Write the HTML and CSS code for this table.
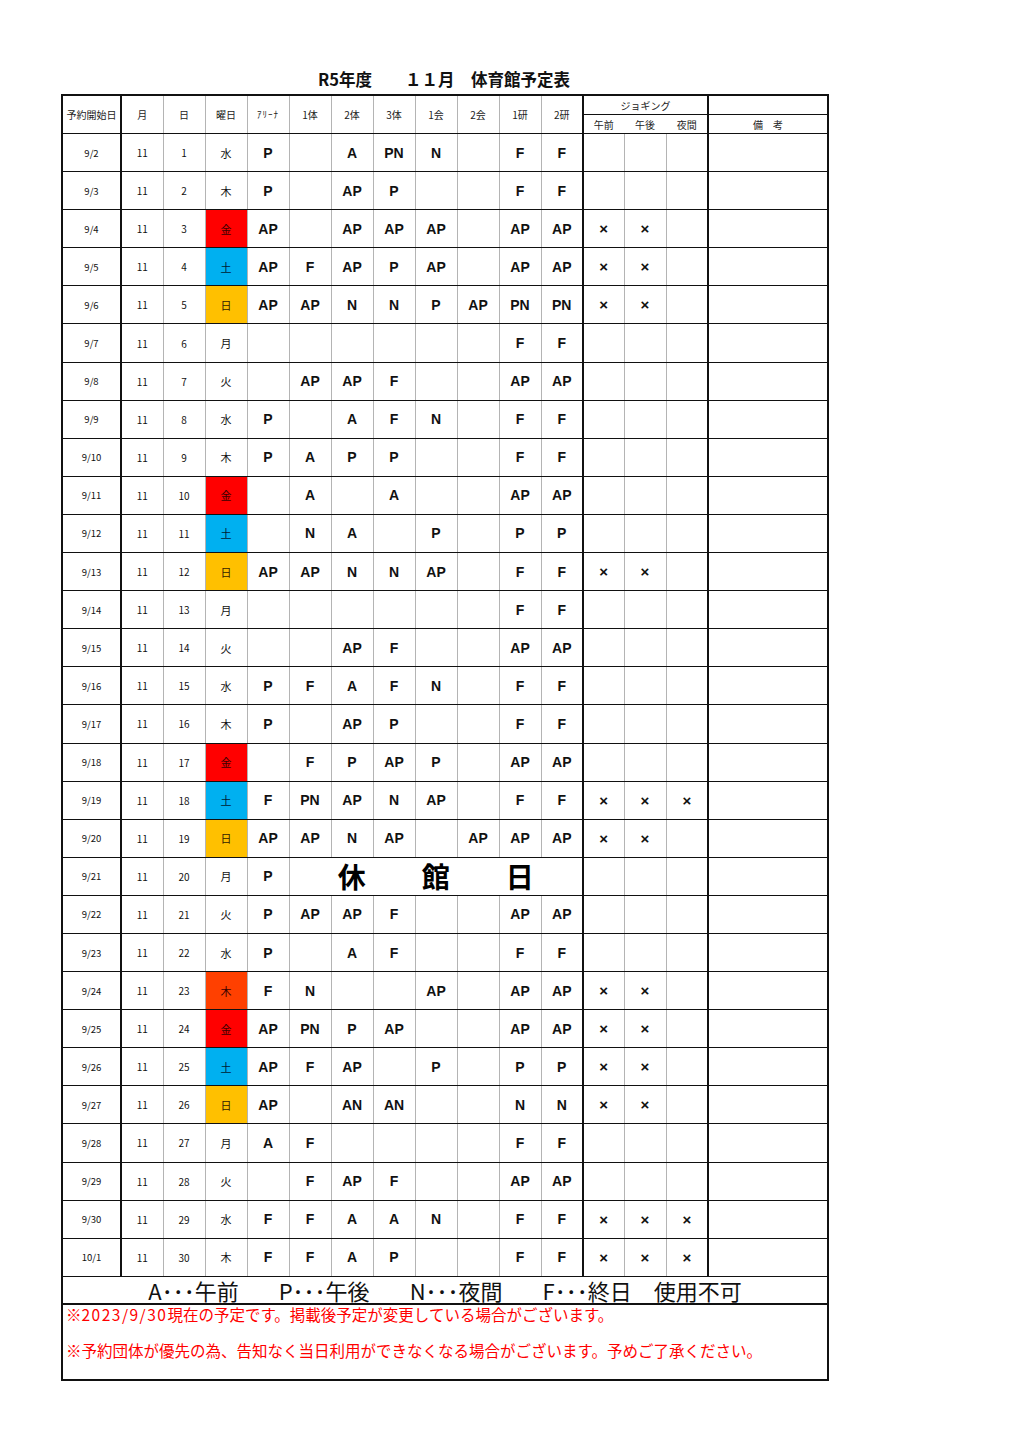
FILE: index.html
```html
<!DOCTYPE html>
<html lang="ja">
<head>
<meta charset="utf-8">
<title>R5年度 11月 体育館予定表</title>
<link rel="stylesheet" href="styles.css">
</head>
<body>
<div class="page">
  <h1 class="title">R5年度　　１１月　体育館予定表</h1>
  <table class="sched">
    <colgroup>
      <col class="c-date"><col class="c-n"><col class="c-n"><col class="c-n">
      <col class="c-n"><col class="c-n"><col class="c-n"><col class="c-n"><col class="c-n"><col class="c-n"><col class="c-n"><col class="c-n">
      <col class="c-j"><col class="c-n"><col class="c-n"><col class="c-note">
    </colgroup>
    <thead>
      <tr class="h1">
        <th rowspan="2" class="dk">予約開始日</th>
        <th rowspan="2">月</th>
        <th rowspan="2">日</th>
        <th rowspan="2">曜日</th>
        <th rowspan="2" class="hk">ｱﾘｰﾅ</th>
        <th rowspan="2">1体</th>
        <th rowspan="2">2体</th>
        <th rowspan="2">3体</th>
        <th rowspan="2">1会</th>
        <th rowspan="2">2会</th>
        <th rowspan="2">1研</th>
        <th rowspan="2" class="dk">2研</th>
        <th colspan="3" class="dk">ジョギング</th>
        <th></th>
      </tr>
      <tr class="h2">
        <th class="nb">午前</th>
        <th class="nb">午後</th>
        <th class="dk">夜間</th>
        <th>備　考</th>
      </tr>
    </thead>
    <tbody>
      <tr><td class="d dk">9/2</td><td class="m">11</td><td class="m">1</td><td class="w">水</td><td>P</td><td></td><td>A</td><td>PN</td><td>N</td><td></td><td>F</td><td class="dk">F</td><td></td><td></td><td class="dk"></td><td></td></tr>
      <tr><td class="d dk">9/3</td><td class="m">11</td><td class="m">2</td><td class="w">木</td><td>P</td><td></td><td>AP</td><td>P</td><td></td><td></td><td>F</td><td class="dk">F</td><td></td><td></td><td class="dk"></td><td></td></tr>
      <tr><td class="d dk">9/4</td><td class="m">11</td><td class="m">3</td><td class="w fri">金</td><td>AP</td><td></td><td>AP</td><td>AP</td><td>AP</td><td></td><td>AP</td><td class="dk">AP</td><td class="x">×</td><td class="x">×</td><td class="dk"></td><td></td></tr>
      <tr><td class="d dk">9/5</td><td class="m">11</td><td class="m">4</td><td class="w sat">土</td><td>AP</td><td>F</td><td>AP</td><td>P</td><td>AP</td><td></td><td>AP</td><td class="dk">AP</td><td class="x">×</td><td class="x">×</td><td class="dk"></td><td></td></tr>
      <tr><td class="d dk">9/6</td><td class="m">11</td><td class="m">5</td><td class="w sun">日</td><td>AP</td><td>AP</td><td>N</td><td>N</td><td>P</td><td>AP</td><td>PN</td><td class="dk">PN</td><td class="x">×</td><td class="x">×</td><td class="dk"></td><td></td></tr>
      <tr><td class="d dk">9/7</td><td class="m">11</td><td class="m">6</td><td class="w">月</td><td></td><td></td><td></td><td></td><td></td><td></td><td>F</td><td class="dk">F</td><td></td><td></td><td class="dk"></td><td></td></tr>
      <tr><td class="d dk">9/8</td><td class="m">11</td><td class="m">7</td><td class="w">火</td><td></td><td>AP</td><td>AP</td><td>F</td><td></td><td></td><td>AP</td><td class="dk">AP</td><td></td><td></td><td class="dk"></td><td></td></tr>
      <tr><td class="d dk">9/9</td><td class="m">11</td><td class="m">8</td><td class="w">水</td><td>P</td><td></td><td>A</td><td>F</td><td>N</td><td></td><td>F</td><td class="dk">F</td><td></td><td></td><td class="dk"></td><td></td></tr>
      <tr><td class="d dk">9/10</td><td class="m">11</td><td class="m">9</td><td class="w">木</td><td>P</td><td>A</td><td>P</td><td>P</td><td></td><td></td><td>F</td><td class="dk">F</td><td></td><td></td><td class="dk"></td><td></td></tr>
      <tr><td class="d dk">9/11</td><td class="m">11</td><td class="m">10</td><td class="w fri">金</td><td></td><td>A</td><td></td><td>A</td><td></td><td></td><td>AP</td><td class="dk">AP</td><td></td><td></td><td class="dk"></td><td></td></tr>
      <tr><td class="d dk">9/12</td><td class="m">11</td><td class="m">11</td><td class="w sat">土</td><td></td><td>N</td><td>A</td><td></td><td>P</td><td></td><td>P</td><td class="dk">P</td><td></td><td></td><td class="dk"></td><td></td></tr>
      <tr><td class="d dk">9/13</td><td class="m">11</td><td class="m">12</td><td class="w sun">日</td><td>AP</td><td>AP</td><td>N</td><td>N</td><td>AP</td><td></td><td>F</td><td class="dk">F</td><td class="x">×</td><td class="x">×</td><td class="dk"></td><td></td></tr>
      <tr><td class="d dk">9/14</td><td class="m">11</td><td class="m">13</td><td class="w">月</td><td></td><td></td><td></td><td></td><td></td><td></td><td>F</td><td class="dk">F</td><td></td><td></td><td class="dk"></td><td></td></tr>
      <tr><td class="d dk">9/15</td><td class="m">11</td><td class="m">14</td><td class="w">火</td><td></td><td></td><td>AP</td><td>F</td><td></td><td></td><td>AP</td><td class="dk">AP</td><td></td><td></td><td class="dk"></td><td></td></tr>
      <tr><td class="d dk">9/16</td><td class="m">11</td><td class="m">15</td><td class="w">水</td><td>P</td><td>F</td><td>A</td><td>F</td><td>N</td><td></td><td>F</td><td class="dk">F</td><td></td><td></td><td class="dk"></td><td></td></tr>
      <tr><td class="d dk">9/17</td><td class="m">11</td><td class="m">16</td><td class="w">木</td><td class="dot">P</td><td class="dot"></td><td>AP</td><td class="dot">P</td><td></td><td></td><td>F</td><td class="dk">F</td><td></td><td></td><td class="dk"></td><td></td></tr>
      <tr><td class="d dk">9/18</td><td class="m">11</td><td class="m">17</td><td class="w fri">金</td><td class="dot"></td><td class="dot">F</td><td>P</td><td class="dot">AP</td><td>P</td><td></td><td>AP</td><td class="dk">AP</td><td class="dot"></td><td></td><td class="dk"></td><td></td></tr>
      <tr><td class="d dk">9/19</td><td class="m">11</td><td class="m">18</td><td class="w sat">土</td><td>F</td><td>PN</td><td>AP</td><td>N</td><td>AP</td><td></td><td>F</td><td class="dk">F</td><td class="x">×</td><td class="x">×</td><td class="x dk">×</td><td></td></tr>
      <tr><td class="d dk">9/20</td><td class="m">11</td><td class="m">19</td><td class="w sun">日</td><td>AP</td><td>AP</td><td>N</td><td>AP</td><td></td><td>AP</td><td>AP</td><td class="dk">AP</td><td class="x">×</td><td class="x">×</td><td class="dk"></td><td></td></tr>
      <tr><td class="d dk">9/21</td><td class="m">11</td><td class="m">20</td><td class="w">月</td><td>P</td><td colspan="7" class="closed dk">休　　館　　日</td><td></td><td></td><td class="dk"></td><td></td></tr>
      <tr><td class="d dk">9/22</td><td class="m">11</td><td class="m">21</td><td class="w">火</td><td>P</td><td>AP</td><td>AP</td><td>F</td><td></td><td></td><td>AP</td><td class="dk">AP</td><td></td><td></td><td class="dk"></td><td></td></tr>
      <tr><td class="d dk">9/23</td><td class="m">11</td><td class="m">22</td><td class="w">水</td><td>P</td><td></td><td>A</td><td>F</td><td></td><td></td><td>F</td><td class="dk">F</td><td></td><td></td><td class="dk"></td><td></td></tr>
      <tr><td class="d dk">9/24</td><td class="m">11</td><td class="m">23</td><td class="w hol">木</td><td>F</td><td>N</td><td></td><td></td><td>AP</td><td></td><td>AP</td><td class="dk">AP</td><td class="x">×</td><td class="x">×</td><td class="dk"></td><td></td></tr>
      <tr><td class="d dk">9/25</td><td class="m">11</td><td class="m">24</td><td class="w fri">金</td><td>AP</td><td>PN</td><td>P</td><td>AP</td><td></td><td></td><td>AP</td><td class="dk">AP</td><td class="x">×</td><td class="x">×</td><td class="dk"></td><td></td></tr>
      <tr><td class="d dk">9/26</td><td class="m">11</td><td class="m">25</td><td class="w sat">土</td><td>AP</td><td>F</td><td>AP</td><td></td><td>P</td><td></td><td>P</td><td class="dk">P</td><td class="x">×</td><td class="x">×</td><td class="dk"></td><td></td></tr>
      <tr><td class="d dk">9/27</td><td class="m">11</td><td class="m">26</td><td class="w sun">日</td><td>AP</td><td></td><td>AN</td><td>AN</td><td></td><td></td><td>N</td><td class="dk">N</td><td class="x">×</td><td class="x">×</td><td class="dk"></td><td></td></tr>
      <tr><td class="d dk">9/28</td><td class="m">11</td><td class="m">27</td><td class="w">月</td><td>A</td><td>F</td><td></td><td></td><td></td><td></td><td>F</td><td class="dk">F</td><td></td><td></td><td class="dk"></td><td></td></tr>
      <tr><td class="d dk">9/29</td><td class="m">11</td><td class="m">28</td><td class="w">火</td><td></td><td>F</td><td>AP</td><td>F</td><td></td><td></td><td>AP</td><td class="dk">AP</td><td></td><td></td><td class="dk"></td><td></td></tr>
      <tr><td class="d dk">9/30</td><td class="m">11</td><td class="m">29</td><td class="w">水</td><td>F</td><td>F</td><td>A</td><td>A</td><td>N</td><td></td><td>F</td><td class="dk">F</td><td class="x">×</td><td class="x">×</td><td class="x dk">×</td><td></td></tr>
      <tr><td class="d dk">10/1</td><td class="m">11</td><td class="m">30</td><td class="w">木</td><td>F</td><td>F</td><td>A</td><td>P</td><td></td><td></td><td>F</td><td class="dk">F</td><td class="x">×</td><td class="x">×</td><td class="x dk">×</td><td></td></tr>
    </tbody>
    <tfoot>
      <tr class="legend-row">
        <td colspan="16" class="legend"><span class="lg">A･･･午前</span><span class="lg">P･･･午後</span><span class="lg">N･･･夜間</span><span class="lg">F･･･終日　使用不可</span></td>
      </tr>
      <tr class="notes-row">
        <td colspan="16" class="notes">
          <p class="note">※<span class="num">2023/9/30</span>現在の予定です。掲載後予定が変更している場合がございます。</p>
          <p class="note">※予約団体が優先の為、告知なく当日利用ができなくなる場合がございます。予めご了承ください。</p>
        </td>
      </tr>
    </tfoot>
  </table>
</div>
</body>
</html>
```

FILE: styles.css
```css
html, body {
  margin: 0;
  padding: 0;
  background: #fff;
}

body {
  font-family: "Noto Sans CJK JP", "Noto Sans", sans-serif;
  color: #111;
}

.page {
  padding: 66px 0 0 61px;
  width: 766px;
}

.title {
  margin: 0 0 2px 0;
  height: 26px;
  line-height: 26px;
  font-size: 16.5px;
  font-weight: 700;
  text-align: center;
  letter-spacing: 0;
}

.sched {
  width: 766px;
  table-layout: fixed;
  border-collapse: collapse;
  border: 2px solid #111;
}

.c-date { width: 59px; }
.c-n { width: 42px; }
.c-j { width: 41px; }
.c-note { width: 120px; }

.sched th,
.sched td {
  padding: 0;
  text-align: center;
  vertical-align: middle;
  border-left: 1px solid #b4b4b4;
  border-right: 1px solid #b4b4b4;
  border-top: 1px solid #111;
  border-bottom: 1px solid #111;
  overflow: hidden;
  white-space: nowrap;
}

.sched th {
  font-size: 10px;
  font-weight: 400;
  height: 18px;
  color: #222;
}

.sched th.hk {
  font-size: 9px;
  letter-spacing: 1px;
}

.h2 th.nb {
  border-left: 1px solid #fff;
  border-right: 1px solid #fff;
}

.sched .dk {
  border-right: 2px solid #111;
}

.sched tbody td {
  height: 37.1px;
  font-family: "Liberation Sans", Arial, sans-serif;
  font-size: 14px;
  font-weight: 700;
  color: #111;
}

.sched tbody td.d {
  font-family: "Noto Sans CJK JP", sans-serif;
  font-size: 9.5px;
  font-weight: 400;
}

.sched tbody td.m {
  font-family: "Noto Sans CJK JP", sans-serif;
  font-size: 10px;
  font-weight: 400;
}

.sched tbody td.w {
  font-family: "Noto Sans CJK JP", sans-serif;
  font-size: 11px;
  font-weight: 400;
}

.sched tbody td.x {
  font-size: 15px;
  font-weight: 700;
}

.sched tbody td.dot {
  border-right: 1px dotted #555;
}

.fri { background: #ff0000; color: #3a0000 !important; }
.sat { background: #00b0f0; color: #001a33 !important; }
.sun { background: #ffc000; color: #332200 !important; }
.hol { background: #ff4000; color: #3a0000 !important; }

.sched tbody td.closed {
  font-family: "Noto Sans CJK JP", sans-serif;
  font-size: 28px;
  font-weight: 700;
  line-height: 1;
  color: #000;
}

.sched td.legend {
  height: 26px;
  font-size: 22px;
  font-weight: 400;
  line-height: 24px;
  color: #111;
  overflow: visible;
  border-right: 2px solid #111;
}

.lg {
  margin: 0 20px;
}

.sched td.notes {
  height: 74px;
  text-align: left;
  vertical-align: top;
  padding: 0 0 0 3px;
  border-top: 2px solid #111;
}

.note {
  margin: 0;
  height: 36px;
  line-height: 18px;
  font-size: 15.5px;
  color: #ff0000;
}

.num {
  letter-spacing: 1.5px;
}
```
